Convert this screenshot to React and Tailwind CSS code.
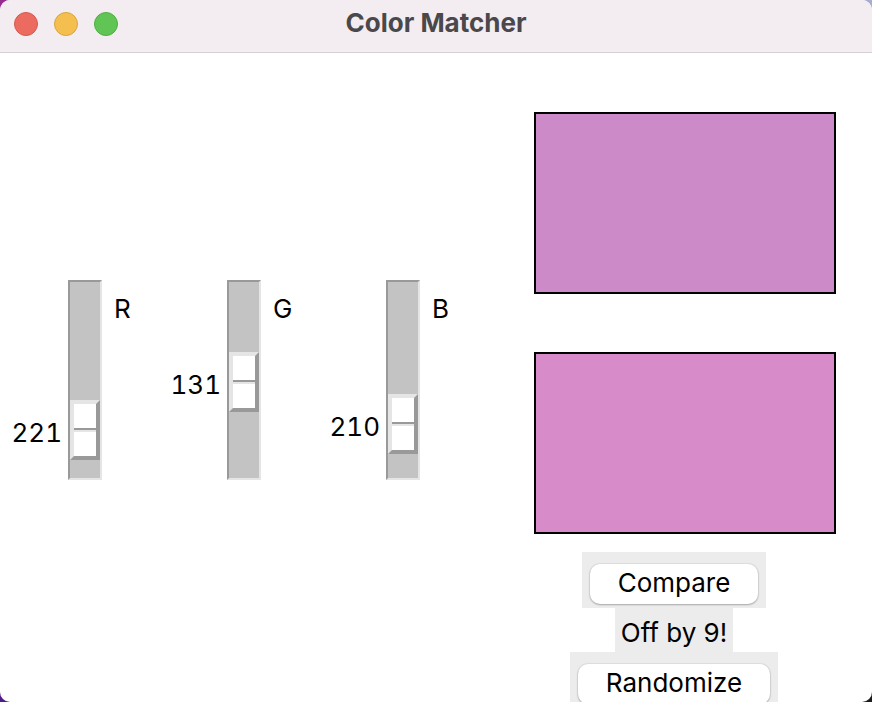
import { useState } from "react";

const TRACK_TRAVEL = 136;

const toCss = (channels) => `rgb(${channels.join(",")})`;

function Channel({ name, value, onChange }) {
  const id = `channel-${name}`;
  const offset = Math.round((value / 255) * TRACK_TRAVEL);
  return (
    <div className="flex w-[159px] items-start">
      <output
        htmlFor={id}
        className="w-[62px] text-right leading-8 tabular-nums"
        style={{ marginTop: 19 + offset }}
      >
        {value}
      </output>
      <input
        id={id}
        type="range"
        min="0"
        max="255"
        value={value}
        onChange={(e) => onChange(Number(e.target.value))}
        className="ml-[6px] h-[200px] w-[34px] shrink-0 appearance-none border-2 border-t-[#999999] border-r-[#e5e5e5] border-b-[#e5e5e5] border-l-[#999999] bg-[#c3c3c3] [writing-mode:vertical-lr] [&::-webkit-slider-thumb]:h-[60px] [&::-webkit-slider-thumb]:w-[30px] [&::-webkit-slider-thumb]:appearance-none [&::-webkit-slider-thumb]:border-4 [&::-webkit-slider-thumb]:border-t-[#e5e5e5] [&::-webkit-slider-thumb]:border-r-[#999999] [&::-webkit-slider-thumb]:border-b-[#999999] [&::-webkit-slider-thumb]:border-l-[#e5e5e5] [&::-webkit-slider-thumb]:bg-[linear-gradient(#fff_24px,#999_24px,#999_26px,#e5e5e5_26px,#e5e5e5_28px,#fff_28px)]"
      />
      <label htmlFor={id} className="mt-[13px] ml-3 leading-8">
        {name}
      </label>
    </div>
  );
}

function Swatch({ color }) {
  return (
    <div
      className="h-[182px] w-[302px] border-2 border-black"
      style={{ backgroundColor: toCss(color) }}
    />
  );
}

function ActionButton({ children, onClick }) {
  return (
    <div className="bg-[#ececec] px-2 pt-3 pb-1">
      <button
        type="button"
        onClick={onClick}
        className="block h-10 rounded-[10px] bg-white px-7 pb-[2px] leading-[38px] shadow-[0_0_1px_1px_rgba(0,0,0,0.06),0_1px_2px_rgba(0,0,0,0.25)]"
      >
        {children}
      </button>
    </div>
  );
}

export default function App() {
  const [guess, setGuess] = useState([221, 131, 210]);
  const [mixed, setMixed] = useState([215, 140, 201]);
  const [target, setTarget] = useState([205, 138, 201]);
  const [message, setMessage] = useState("Off by 9!");

  const setChannel = (index) => (value) => {
    const next = guess.map((v, i) => (i === index ? value : v));
    setGuess(next);
    setMixed(next);
  };

  const compare = () => {
    const total = guess.reduce((sum, v, i) => sum + Math.abs(v - target[i]), 0);
    setMessage(`Off by ${Math.round(total / 3)}!`);
  };

  const randomize = () =>
    setTarget([0, 1, 2].map(() => Math.floor(Math.random() * 256)));

  return (
    <div className="h-screen overflow-hidden bg-[conic-gradient(#a7acd0_25%,#1c1c1c_25%,#1c1c1c_50%,#4f1a8c_50%,#4f1a8c_75%,#982b92_75%)] font-[Inter,'Liberation_Sans',sans-serif] text-[26px] text-black">
      <div className="flex h-full flex-col overflow-hidden rounded-[10px] bg-white">
        <header className="grid h-[53px] shrink-0 grid-cols-[1fr_auto_1fr] items-center border-b border-[#d5d1d4] bg-[#f3edf2] pb-[5px]">
          <div className="flex gap-4 pl-[14px]">
            <button type="button" aria-label="Close" className="size-6 rounded-full border border-[#d8584e] bg-[#ec6b60]" />
            <button type="button" aria-label="Minimize" className="size-6 rounded-full border border-[#d9a441] bg-[#f5bf50]" />
            <button type="button" aria-label="Zoom" className="size-6 rounded-full border border-[#4fae41] bg-[#61c555]" />
          </div>
          <h1 className="pb-[2px] text-[26px] leading-8 font-bold text-[#4a484a]">Color Matcher</h1>
        </header>
        <main className="flex flex-1 items-start justify-between">
          <section className="mt-[227px] flex">
            <Channel name="R" value={guess[0]} onChange={setChannel(0)} />
            <Channel name="G" value={guess[1]} onChange={setChannel(1)} />
            <Channel name="B" value={guess[2]} onChange={setChannel(2)} />
          </section>
          <section className="mt-[59px] mr-9 flex w-[324px] flex-col items-center">
            <div className="mb-[18px] flex flex-col gap-[58px] self-end">
              <Swatch color={target} />
              <Swatch color={mixed} />
            </div>
            <ActionButton onClick={compare}>Compare</ActionButton>
            <p className="bg-[#ececec] px-[6px] pt-[9px] pb-[3px] leading-8">{message}</p>
            <ActionButton onClick={randomize}>Randomize</ActionButton>
          </section>
        </main>
      </div>
    </div>
  );
}
